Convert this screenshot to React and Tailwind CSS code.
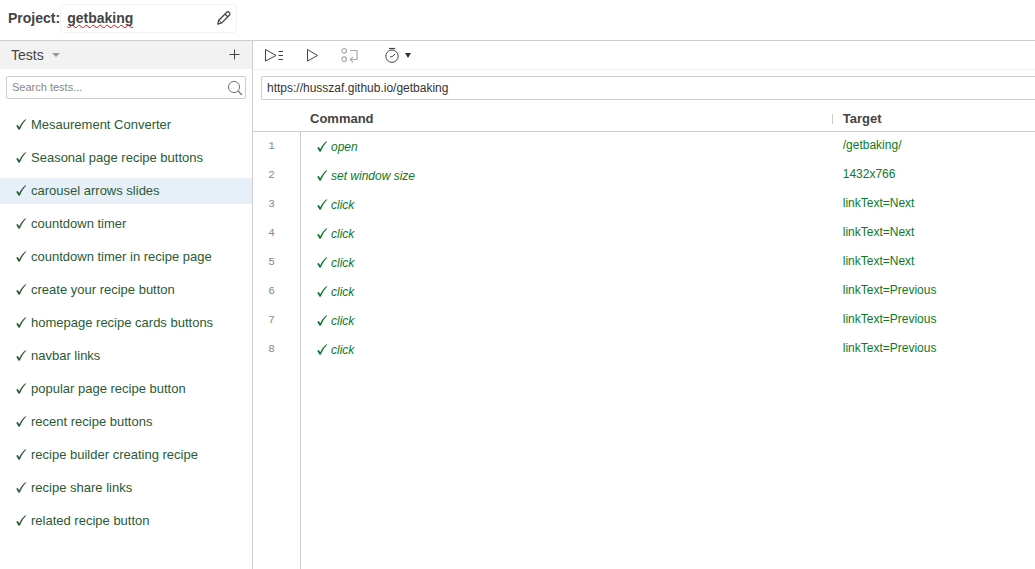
import React, { useState } from "react";

const tests = [
  "Mesaurement Converter",
  "Seasonal page recipe buttons",
  "carousel arrows slides",
  "countdown timer",
  "countdown timer in recipe page",
  "create your recipe button",
  "homepage recipe cards buttons",
  "navbar links",
  "popular page recipe button",
  "recent recipe buttons",
  "recipe builder creating recipe",
  "recipe share links",
  "related recipe button",
];

const steps = [
  ["open", "/getbaking/"],
  ["set window size", "1432x766"],
  ["click", "linkText=Next"],
  ["click", "linkText=Next"],
  ["click", "linkText=Next"],
  ["click", "linkText=Previous"],
  ["click", "linkText=Previous"],
  ["click", "linkText=Previous"],
];

function Check({ className }) {
  return (
    <svg viewBox="0 0 11 12" className={className} fill="currentColor" aria-hidden="true">
      <path d="M0.2 6.8 L1.8 5.9 L3.3 8.2 C4.9 4.8 6.8 2.2 9.6 0.2 L10.3 0.6 C7.5 3.5 5.5 6.6 3.9 10.6 L2.6 10.8 Z" />
    </svg>
  );
}

function Pencil() {
  return (
    <svg viewBox="0 0 16 16" className="h-4 w-4" fill="none" stroke="#444" strokeWidth="1.3" strokeLinejoin="round" aria-hidden="true">
      <path d="M1.8 14.2 L2.8 10.2 L10.8 2.2 Q12 1.2 13.2 2.4 Q14.6 3.8 13.6 5 L5.8 12.9 Z" />
      <path d="M9 4 L12 7" />
      <path d="M2.8 10.2 L5.8 12.9" strokeWidth="1" />
    </svg>
  );
}

function RunAllIcon() {
  return (
    <svg viewBox="0 0 20 14" className="h-3.5 w-5" fill="none" stroke="#444" aria-hidden="true">
      <path d="M1.5 1.5 L12 7.5 L1.5 13 Z" />
      <path d="M14.5 3.5 H19 M14.5 7.5 H19 M14.5 11.5 H19" strokeWidth="1.2" />
    </svg>
  );
}

function RunIcon() {
  return (
    <svg viewBox="0 0 12 14" className="h-3.5 w-3" fill="none" stroke="#444" aria-hidden="true">
      <path d="M1.5 1.5 L11.5 7.5 L1.5 13 Z" />
    </svg>
  );
}

function StepIcon() {
  return (
    <svg viewBox="0 0 18 16" className="h-4 w-[18px]" fill="none" stroke="#aaa" strokeWidth="1.2" aria-hidden="true">
      <circle cx="4.2" cy="3.8" r="2.3" />
      <circle cx="4.2" cy="12.2" r="2.3" />
      <path d="M10 3.5 H17 V12.5 H10.5 M13 9.8 L10.3 12.5 L13 15.2" />
    </svg>
  );
}

function SpeedIcon() {
  return (
    <svg viewBox="0 0 14 16" className="h-4 w-3.5" fill="none" stroke="#444" aria-hidden="true">
      <circle cx="7" cy="9.2" r="6.2" />
      <path d="M4 1.5 H10" strokeWidth="1.2" />
      <path d="M5 9.8 L7 9.8 L10.2 7" />
    </svg>
  );
}

export default function App() {
  const [selected, setSelected] = useState(2);
  return (
    <div className="flex min-h-screen flex-col overflow-hidden bg-white font-['Liberation_Sans',Arial,sans-serif] text-[13px] text-[#444]">
      <header className="flex h-[41px] items-center border-b border-[#ccc] pb-1 pl-2">
        <label htmlFor="project" className="text-sm leading-5 font-bold">Project:</label>
        <div className="flex h-[29px] w-[177px] items-center rounded border border-[#f2f2f2] pr-1">
          <input
            id="project"
            defaultValue="getbaking"
            className="min-w-0 flex-1 bg-transparent pl-1.5 text-sm leading-5 font-bold text-[#444] underline decoration-[#f00] decoration-wavy decoration-1 underline-offset-1 outline-none [text-decoration-skip-ink:none]"
          />
          <button type="button" aria-label="Rename project"><Pencil /></button>
        </div>
      </header>

      <div className="flex flex-1">
        <aside className="w-[253px] shrink-0 border-r border-[#ccc]">
          <div className="flex h-7 items-center justify-between bg-[#f2f2f2] pr-3 pl-[11px]">
            <button type="button" className="flex items-center gap-2 text-sm leading-5">
              Tests
              <svg viewBox="0 0 8 4" className="h-1 w-2" fill="#999" aria-hidden="true"><path d="M0 0 H8 L4 4 Z" /></svg>
            </button>
            <button type="button" aria-label="Add new test">
              <svg viewBox="0 0 12 12" className="h-3 w-3" stroke="#444" aria-hidden="true"><path d="M6.5 0.5 V10.5 M1.5 5.5 H11.5" /></svg>
            </button>
          </div>
          <div className="mx-1.5 mt-[7px] flex h-[23px] items-center rounded-xs border border-[#ccc] pr-0.5 pl-[5px]">
            <input
              type="search"
              aria-label="Search tests"
              placeholder="Search tests..."
              className="min-w-0 flex-1 bg-transparent text-[11px] outline-none placeholder:text-[#888]"
            />
            <svg viewBox="0 0 16 16" className="h-4 w-4" fill="none" stroke="#777" aria-hidden="true">
              <circle cx="7" cy="7" r="5.6" />
              <path d="M11 11 L15 15" strokeWidth="1.2" />
            </svg>
          </div>
          <ul className="mt-[13px] flex flex-col gap-[7px]">
            {tests.map((name, i) => (
              <li key={name}>
                <button
                  type="button"
                  onClick={() => setSelected(i)}
                  className={`flex h-[26px] w-full items-center gap-1 pl-4 text-left text-[#2a5a35] ${i === selected ? "bg-[#e7f0f8]" : ""}`}
                >
                  <Check className="h-3 w-[11px]" />
                  {name}
                </button>
              </li>
            ))}
          </ul>
        </aside>

        <main className="flex min-w-0 flex-1 flex-col">
          <div className="flex h-[29px] items-center border-b border-[#f0f0f0] pl-[11px]">
            <button type="button" aria-label="Run all tests" className="mr-[22px]"><RunAllIcon /></button>
            <button type="button" aria-label="Run current test" className="mr-[22px]"><RunIcon /></button>
            <button type="button" aria-label="Step over" className="mr-[27px]"><StepIcon /></button>
            <button type="button" aria-label="Test execution speed" className="flex items-center gap-1.5">
              <SpeedIcon />
              <svg viewBox="0 0 6 5" className="h-[5px] w-1.5" fill="#333" aria-hidden="true"><path d="M0 0 H6 L3 5 Z" /></svg>
            </button>
          </div>
          <input
            aria-label="Base URL"
            defaultValue="https://husszaf.github.io/getbaking"
            className="mt-1.5 ml-2 h-6 rounded-l-xs border border-r-0 border-[#ccc] pl-[5px] text-xs text-[#333] outline-none"
          />
          <table className="mt-1.5 w-full table-fixed border-separate border-spacing-0 text-left">
            <thead>
              <tr className="h-[26px] text-[13px]">
                <th aria-label="Step" className="w-12 border-b border-[#ccc]" />
                <th className="w-[68%] border-b border-[#ccc] p-0 pl-[9px]">
                  <div className="flex items-center justify-between">
                    Command
                    <span className="h-2.5 w-px bg-[#ccc]" />
                  </div>
                </th>
                <th className="border-b border-[#ccc] p-0 pl-2.5">Target</th>
              </tr>
            </thead>
            <tbody>
              {steps.map(([command, target], i) => (
                <tr key={i} className="h-[29px] text-xs text-[#0a7a2a]">
                  <td className="border-r border-[#ccc] p-0 pr-2.5 text-center font-['Liberation_Mono',monospace] text-[11px] text-[#888]">{i + 1}</td>
                  <td className="p-0 pl-4">
                    <div className="flex items-center gap-[3px] italic">
                      <Check className="h-3 w-[11px]" />
                      {command}
                    </div>
                  </td>
                  <td className="p-0 pb-1 pl-2.5">{target}</td>
                </tr>
              ))}
            </tbody>
          </table>
          <div className="w-12 flex-1 border-r border-[#ccc]" />
        </main>
      </div>
    </div>
  );
}
